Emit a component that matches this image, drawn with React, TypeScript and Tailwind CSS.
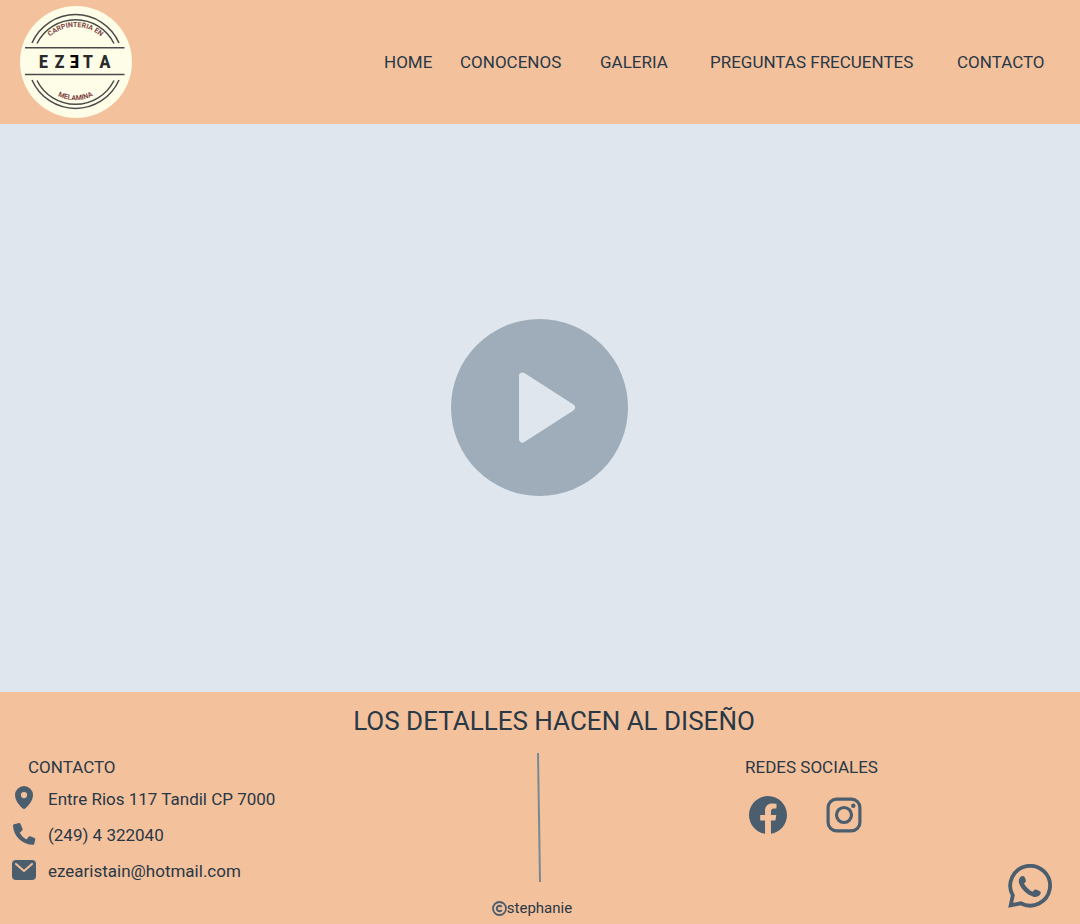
import React from "react";

const navLinks = ["HOME", "CONOCENOS", "GALERIA", "PREGUNTAS FRECUENTES", "CONTACTO"];

function Logo() {
  return (
    <svg viewBox="20 6 112 112" className="size-28" role="img" aria-label="Ezeta, carpintería en melamina">
      <circle cx="76" cy="62" r="56" fill="#fefde8" />
      <g fill="none" stroke="#4a4a4a" strokeWidth="1.5">
        <path d="M25 47.7H124.500M25 74.500H124.500" />
        <path d="M32 43A47.500 47.500 0 0 1 119 43" />
        <path d="M37 43.500A43 43 0 0 1 114 43.500" />
        <path d="M32 80A47.500 47.500 0 0 0 119 80" />
        <path d="M37 80.500A43 43 0 0 0 114 80.500" />
      </g>
      <path id="arc-top" d="M41 49A38 38 0 0 1 110 49" fill="none" />
      <path id="arc-bottom" d="M48 88A37 37 0 0 0 103 88" fill="none" />
      <g className="font-['Roboto'] font-bold" fill="#7d4444" fontSize="7" textAnchor="middle">
        <text>
          <textPath href="#arc-top" startOffset="50%">CARPINTERIA EN</textPath>
        </text>
        <text>
          <textPath href="#arc-bottom" startOffset="50%">MELAMINA</textPath>
        </text>
      </g>
      <g
        className="font-['Roboto_Condensed','Roboto',sans-serif] font-bold"
        fontSize="19"
        fill="#2a2a2a"
        textAnchor="middle"
      >
        <text x="43.5" y="68">E</text>
        <text x="59.5" y="68">Z</text>
        <text fill="#000000" transform="translate(74.5 54.500) rotate(180)">E</text>
        <text x="88" y="68">T</text>
        <text x="105" y="68">A</text>
      </g>
    </svg>
  );
}

function PinIcon() {
  return (
    <svg viewBox="0 0 24 24" className="size-6" fill="currentColor" aria-hidden="true">
      <path fillRule="evenodd" d="M12 0A9 9 0 0 0 3 9c0 6 5.500 12 9 14.300 3.500-2.300 9-8.300 9-14.300a9 9 0 0 0-9-9Zm0 6a3.100 3.100 0 1 1 0 6.200A3.100 3.100 0 0 1 12 6Z" />
    </svg>
  );
}

function PhoneIcon() {
  return (
    <svg viewBox="0 0 24 24" className="size-6" fill="currentColor" aria-hidden="true">
      <path d="M2 2.300 7 1c.6-.1 1.200.2 1.400.7l2.200 5.200c.2.500.1 1.100-.4 1.500L7.700 10.700a17 17 0 0 0 6.700 6.700l2.300-2.700c.4-.5 1-.6 1.500-.4l4.300 1.600c.6.2.9.8.8 1.400l-1 4.400c-.1.600-.6 1-1.200 1C10.500 22.700 1.500 14.500 1 3.400c0-.5.500-1 1-1.100Z" />
    </svg>
  );
}

function MailIcon() {
  return (
    <svg viewBox="0 0 24 24" className="size-6" aria-hidden="true">
      <rect y="2" width="24" height="20" rx="4" fill="currentColor" />
      <path d="m4 6 8 7 8-7" fill="none" stroke="#f4c19d" strokeWidth="2" strokeLinecap="round" strokeLinejoin="round" />
    </svg>
  );
}

function FacebookIcon() {
  return (
    <svg viewBox="2 2 20 20" className="size-[38px]" fill="currentColor" aria-hidden="true">
      <path d="M12 2C6.477 2 2 6.477 2 12c0 4.991 3.657 9.128 8.438 9.879V14.890h-2.540V12h2.540V9.797c0-2.506 1.492-3.890 3.777-3.890 1.094 0 2.238.195 2.238.195v2.460h-1.260c-1.243 0-1.630.771-1.630 1.562V12h2.773l-.443 2.890h-2.330v6.989C18.343 21.129 22 16.990 22 12c0-5.523-4.477-10-10-10z" />
    </svg>
  );
}

function InstagramIcon() {
  return (
    <svg viewBox="0 0 36 36" className="size-9" fill="none" stroke="currentColor" strokeWidth="3.200" aria-hidden="true">
      <rect x="2.100" y="2.100" width="31.800" height="31.800" rx="8.500" />
      <circle cx="18" cy="18" r="7.500" />
      <circle cx="27.300" cy="8.800" r="2.200" fill="currentColor" stroke="none" />
    </svg>
  );
}

function WhatsappIcon() {
  return (
    <svg viewBox="0 0 44 44" className="size-11" aria-hidden="true">
      <path
        d="M4.800 31.500A19.900 19.900 0 1 1 12.800 39.300L2.700 41.400Z"
        fill="none"
        stroke="currentColor"
        strokeWidth="3.800"
      />
      <path
        d="M12.200 13.200c1.200-1.300 3.400-1.600 4.200-.4.600 1 1.600 3 1.500 4.100 0 .9-1.700 2-1.700 2.700 0 1.700 5.600 7.300 8 8 .9.300 2-2 3-2.100 1.100-.2 4.100 1.300 5.100 2.100 1 .9.300 2.900-1.100 4-1.600 1.300-3.600 1.700-5.800 1.100-6-1.600-12.700-8-14.300-13.400-.7-2.200-.3-4.600 1.100-6.100Z"
        fill="currentColor"
      />
    </svg>
  );
}

const contacts = [
  { icon: <PinIcon />, text: "Entre Rios 117 Tandil CP 7000" },
  { icon: <PhoneIcon />, text: "(249) 4 322040", href: "tel:2494322040" },
  { icon: <MailIcon />, text: "ezearistain@hotmail.com", href: "mailto:ezearistain@hotmail.com" },
];

export default function App() {
  return (
    <div className="flex min-h-screen flex-col bg-[#f4c19d] font-['Roboto',sans-serif] text-[17px] text-[#283845]">
      <header className="flex items-center justify-between py-1.5 pl-5 pr-10">
        <a href="#home">
          <Logo />
        </a>
        <nav className="grid grid-cols-[76px_140px_110px_247px_83px] whitespace-nowrap pt-0.5">
          {navLinks.map((label) => (
            <a key={label} href={"#" + label.toLowerCase().replace(" ", "-")}>
              {label}
            </a>
          ))}
        </nav>
      </header>

      <main className="flex flex-1 items-center justify-center bg-[#dfe6ee] pb-[34px] pr-0.5 pt-8">
        <button type="button" aria-label="Reproducir video">
          <svg viewBox="0 0 177 177" className="size-[177px]" aria-hidden="true">
            <circle cx="88.500" cy="88.500" r="88.500" fill="#9eadb9" />
            <path d="M71.500 57 120.500 88.500 71.500 120Z" fill="#dfe6ee" stroke="#dfe6ee" strokeWidth="7" strokeLinejoin="round" />
          </svg>
        </button>
      </main>

      <footer className="pb-1 pt-3">
        <h1 className="pl-7 text-center text-[26px] leading-[34px]">LOS DETALLES HACEN AL DISEÑO</h1>
        <div className="mt-3.5 grid grid-cols-[1fr_auto_1fr]">
          <section className="pl-3">
            <h2 className="pl-4 leading-[30px]">CONTACTO</h2>
            <ul>
              {contacts.map(({ icon, text, href }) => (
                <li key={text} className="flex h-9 items-center gap-3">
                  <span className="pb-1 text-[#4b5e6d]">{icon}</span>
                  {href ? <a href={href}>{text}</a> : <span>{text}</span>}
                </li>
              ))}
            </ul>
          </section>
          <svg viewBox="0 0 6 130" className="h-[130px] w-1.5" aria-hidden="true">
            <path d="M1 1 3 130" fill="none" stroke="#788994" strokeWidth="2" />
          </svg>
          <section className="flex flex-col items-center">
            <div>
              <h2 className="leading-[30px]">REDES SOCIALES</h2>
              <div className="flex items-center gap-[39px] pl-1 pt-3.5 text-[#4b5e6d]">
                <a href="#facebook" aria-label="Facebook">
                  <FacebookIcon />
                </a>
                <a href="#instagram" aria-label="Instagram">
                  <InstagramIcon />
                </a>
              </div>
            </div>
          </section>
        </div>
        <p className="mt-1.5 flex items-center justify-center pr-4 text-[15px] leading-6">
          <svg viewBox="0 0 15 15" className="size-[15px] text-[#4b5e6d]" fill="none" stroke="currentColor" strokeWidth="1.800" aria-hidden="true">
            <circle cx="7.500" cy="7.500" r="6.500" />
            <path d="M9.700 5.900A2.700 2.700 0 1 0 9.700 9.100" strokeWidth="2" />
          </svg>
          stephanie
        </p>
      </footer>

      <a href="#whatsapp" aria-label="WhatsApp" className="fixed bottom-4 right-7 text-[#4b5e6d]">
        <WhatsappIcon />
      </a>
    </div>
  );
}
